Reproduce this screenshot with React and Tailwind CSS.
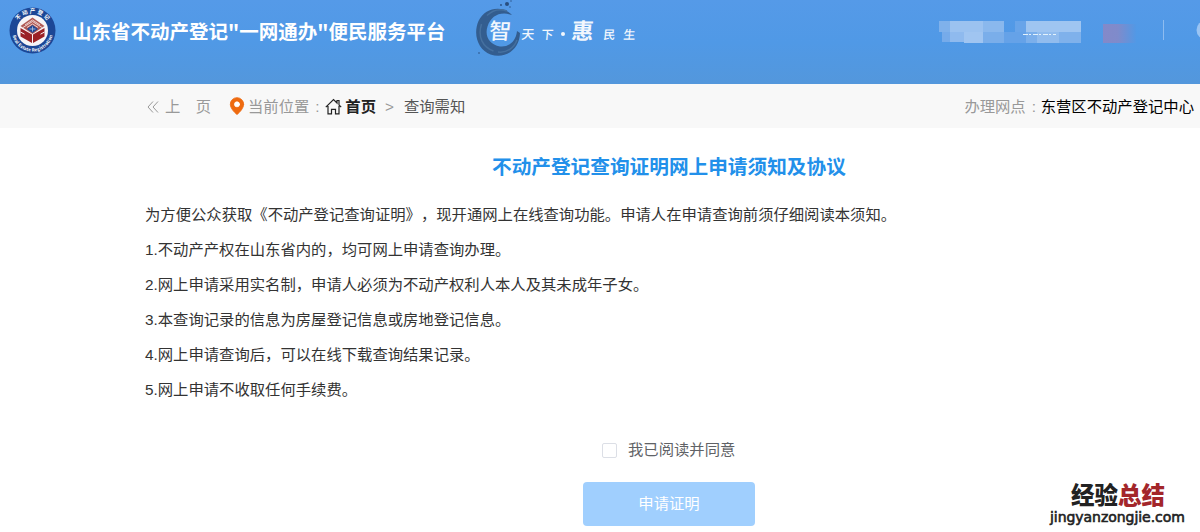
import { MapPin } from 'lucide-react'

const NOTICES = [
  '为方便公众获取《不动产登记查询证明》，现开通网上在线查询功能。申请人在申请查询前须仔细阅读本须知。',
  '1.不动产产权在山东省内的，均可网上申请查询办理。',
  '2.网上申请采用实名制，申请人必须为不动产权利人本人及其未成年子女。',
  '3.本查询记录的信息为房屋登记信息或房地登记信息。',
  '4.网上申请查询后，可以在线下载查询结果记录。',
  '5.网上申请不收取任何手续费。',
]

function Logo() {
  return (
    <svg className="h-[47px] w-[47px] shrink-0" viewBox="0 0 47 47">
      <defs>
        <path id="ringTop" d="M6 23.5a17.5 17.5 0 0 1 35 0" />
        <path id="ringBottom" d="M3 24a20.5 20.5 0 0 0 41 0" />
      </defs>
      <circle cx="23.5" cy="23.5" r="23" fill="#1c4796" />
      <circle cx="23.5" cy="23.5" r="15.5" fill="#f7f4f6" />
      <g fill="#fff" fontFamily="Noto Sans CJK SC, sans-serif" fontSize="5.5" fontWeight="700" textAnchor="middle">
        <text>
          <textPath href="#ringTop" startOffset="50%" textLength="34">不动产登记</textPath>
        </text>
        <text fontSize="4.4">
          <textPath href="#ringBottom" startOffset="50%" textLength="55">Real Estate Registration</textPath>
        </text>
      </g>
      <path d="M23.5 10.5l12 8.5-12 8-12-8z" fill="#b05a55" />
      <path d="M16 18l7.5-5 7.5 5M14 20.5l9.5-6 9.5 6M18 20.5l5.5-3.5 5.5 3.5" fill="none" stroke="#f3dedb" strokeWidth="0.9" />
      <path d="M11.5 21l11.5 6.5v8.500l-11.5-6.500zM35.5 21L24 27.5v8.500l11.500-6.500z" fill="#9b2226" />
      <path d="M23.5 18l5.5 4-5.5 4-5.5-4z" fill="#1c4796" />
      <path d="M23.5 19.5v5M20.5 22h6" stroke="#c9d3ea" strokeWidth="0.7" />
      <path d="M11.5 25l4 2.2M35.5 25l-4 2.2" stroke="#f7f4f6" strokeWidth="1" />
    </svg>
  )
}

// Ink ring with the slogan written across it
function Slogan() {
  return (
    <svg className="ml-[29px] h-[60px] w-[166px] shrink-0" viewBox="474 0 166 60">
      <path
        d="M511 15C502 5 484 7 477.5 21c-6 14 0 29 12 33.5 15 5 29-5 29.5-21.5l-3-2c-1 11-9 16.500-17 15.500-11-2-15.500-11-12.500-20 3.500-11 13-15.500 24.500-11.500z"
        fill="#335d8f"
      />
      <path d="M480.5 24c-4 13 1 23 12 27M486 15.500c6-6 13-7 20-4.500M497 52c9 1 16-4 19-12" fill="none" stroke="#45709f" strokeWidth="1.5" />
      <g fill="#294f80">
        <circle cx="506" cy="4" r="2" />
        <circle cx="500" cy="5" r="0.9" />
        <circle cx="509" cy="7" r="0.7" />
        <circle cx="510" cy="1" r="0.7" />
        <circle cx="478" cy="53" r="0.8" />
      </g>
      <g fill="#f2f7fd" fontFamily="Noto Sans CJK SC, sans-serif" transform="skewX(-5)">
        <text x="491" y="39" fontSize="22" fontWeight="500">智</text>
        <text x="523.5" y="39.5" fontSize="13" fontWeight="500">天</text>
        <text x="543.5" y="39.5" fontSize="12" fontWeight="500">下</text>
        <text x="573.5" y="39" fontSize="22" fontWeight="700">惠</text>
        <text x="605.5" y="39.5" fontSize="12" fontWeight="500">民</text>
        <text x="625.5" y="39.5" fontSize="12" fontWeight="500">生</text>
      </g>
      <circle cx="562" cy="34" r="2" fill="#f2f7fd" />
    </svg>
  )
}

// Masked user name and account links
function MaskedUser() {
  return (
    <svg className="ml-auto h-[60px] w-[270px] shrink-0" viewBox="930 0 270 60">
      <defs>
        <linearGradient id="redFade">
          <stop offset="0" stopColor="#8389c9" />
          <stop offset="0.45" stopColor="#7f8bcb" />
          <stop offset="1" stopColor="#5298e5" />
        </linearGradient>
      </defs>
      <path d="M939 21h11v11h-11z" fill="#7fb1eb" />
      <path d="M950 21h33v11h-33z" fill="#9bc2f0" />
      <path d="M983 21h21v11h-21z" fill="#8ab8ed" />
      <path d="M942 32h8v10h-8z" fill="#76abea" />
      <path d="M950 32h14v10h-14z" fill="#8fbaee" />
      <path d="M964 32h19v11h-19z" fill="#a0c5f1" />
      <path d="M983 32h21v11h-21z" fill="#7aaeea" />
      <path d="M1004 32h22v11h-22z" fill="#65a2e8" />
      <path d="M1015 21h11v11h-11z" fill="#68a4e9" />
      <path d="M1026 21h55v11h-55z" fill="#9fc5f1" />
      <path d="M1026 32h11v11h-11z" fill="#7bafeb" />
      <path d="M1037 32h22v11h-22z" fill="#91bcee" />
      <path d="M1059 32h22v11h-22z" fill="#7fb1eb" />
      <path d="M1023 34.500h33" stroke="#e4f2fb" strokeWidth="1" strokeDasharray="5 1 2 2" />
      <path d="M1103 24h33v19h-33z" fill="url(#redFade)" />
      <path d="M1163.5 20v20" stroke="#8ebcf0" strokeWidth="1" />
      <circle cx="1206" cy="30" r="9.5" fill="#9ac4f3" />
    </svg>
  )
}

function HomeIcon() {
  return (
    <svg className="ml-px h-[17px] w-[17px]" viewBox="0 0 17 17" fill="none" stroke="#222" strokeWidth="1.2">
      <path d="M0.8 9.2L8.5 1.5l3.5 3.5V2.500h2v4.500l2.2 2.2M3 8v7.800h3.500v-4.500h4v4.500H14V8" />
    </svg>
  )
}

function Breadcrumb() {
  return (
    <nav className="flex h-11 items-center bg-[#f8f8f8] pt-px pr-[6px] pl-[147px] text-[15.33px] leading-none whitespace-nowrap text-[#999]">
      <svg className="h-3 w-3" viewBox="0 0 12 12" fill="none" stroke="#999" strokeWidth="1">
        <path d="M6 0.5L1 6l5 5.500M11 0.5L6 6l5 5.500" />
      </svg>
      <span className="ml-[6px]">上　页</span>
      <MapPin className="mb-[2px] ml-[16px] h-[20px] w-[20px] fill-[#ee6a10] text-[#ee6a10] [&>circle]:fill-white [&>circle]:stroke-white" strokeWidth={1} />
      <span className="ml-[1px]">当前位置</span>
      <span className="w-[15px] pl-[6px]">:</span>
      <HomeIcon />
      <a className="ml-[3px] font-bold text-[#222]">首页</a>
      <span className="ml-[9px]">&gt;</span>
      <span className="ml-[10px] text-[#555]">查询需知</span>
      <span className="ml-auto">办理网点</span>
      <span className="w-[15px] pl-[6px]">:</span>
      <span className="text-black">东营区不动产登记中心</span>
    </nav>
  )
}

function Watermark() {
  return (
    <div className="mt-[75px] ml-auto w-[150px] whitespace-nowrap text-[#222]">
      <div className="pl-[21px] text-[23.5px] leading-7 font-black">
        经验<span className="text-[#a3262a]">总结</span>
      </div>
      <div className="-mt-px font-['DejaVu_Sans',sans-serif] text-[14px] leading-4 tracking-[-0.05px] [-webkit-text-stroke:0.6px_#222]">
        jingyanzongjie.com
      </div>
    </div>
  )
}

export default function App() {
  return (
    <div className="flex h-[532px] w-[1200px] flex-col overflow-hidden bg-white font-['Liberation_Sans','Noto_Sans_CJK_SC',sans-serif]">
      <header className="flex h-[84px] shrink-0 items-start bg-linear-to-b from-[#559ae8] via-[#5099e6] to-[#5397dc] pl-[9px]">
        <div className="mt-[7px]">
          <Logo />
        </div>
        <h1 className="mt-[17px] ml-4 w-[374px] shrink-0 font-['Noto_Sans_CJK_SC',sans-serif] text-[19.5px] leading-7 font-bold whitespace-nowrap text-white">
          山东省不动产登记"一网通办"便民服务平台
        </h1>
        <Slogan />
        <MaskedUser />
      </header>

      <Breadcrumb />

      <main className="flex flex-1 flex-col">
        <h2 className="mt-[25px] pl-[492px] text-[19.67px] leading-7 font-bold text-[#2290ea]">
          不动产登记查询证明网上申请须知及协议
        </h2>
        <div className="mt-4 pl-[145px] text-[15.33px] leading-[35px] whitespace-nowrap text-[#333] [text-spacing-trim:space-all]">
          {NOTICES.map((line) => (
            <p key={line}>{line}</p>
          ))}
        </div>

        <div className="flex">
          <div className="ml-[583px] w-[172px]">
            <label className="mt-[29px] flex h-7 items-center pl-[19px] text-[15.33px] text-[#606266]">
              <span className="mr-[11px] h-[15px] w-[15px] rounded-[2px] border border-[#dcdfe6] bg-white" />
              我已阅读并同意
            </label>
            <button className="mt-[18px] block h-11 w-full rounded-[4px] bg-[#a0cffe] text-[15.33px] text-white">
              申请证明
            </button>
          </div>
          <Watermark />
        </div>
      </main>
    </div>
  )
}
